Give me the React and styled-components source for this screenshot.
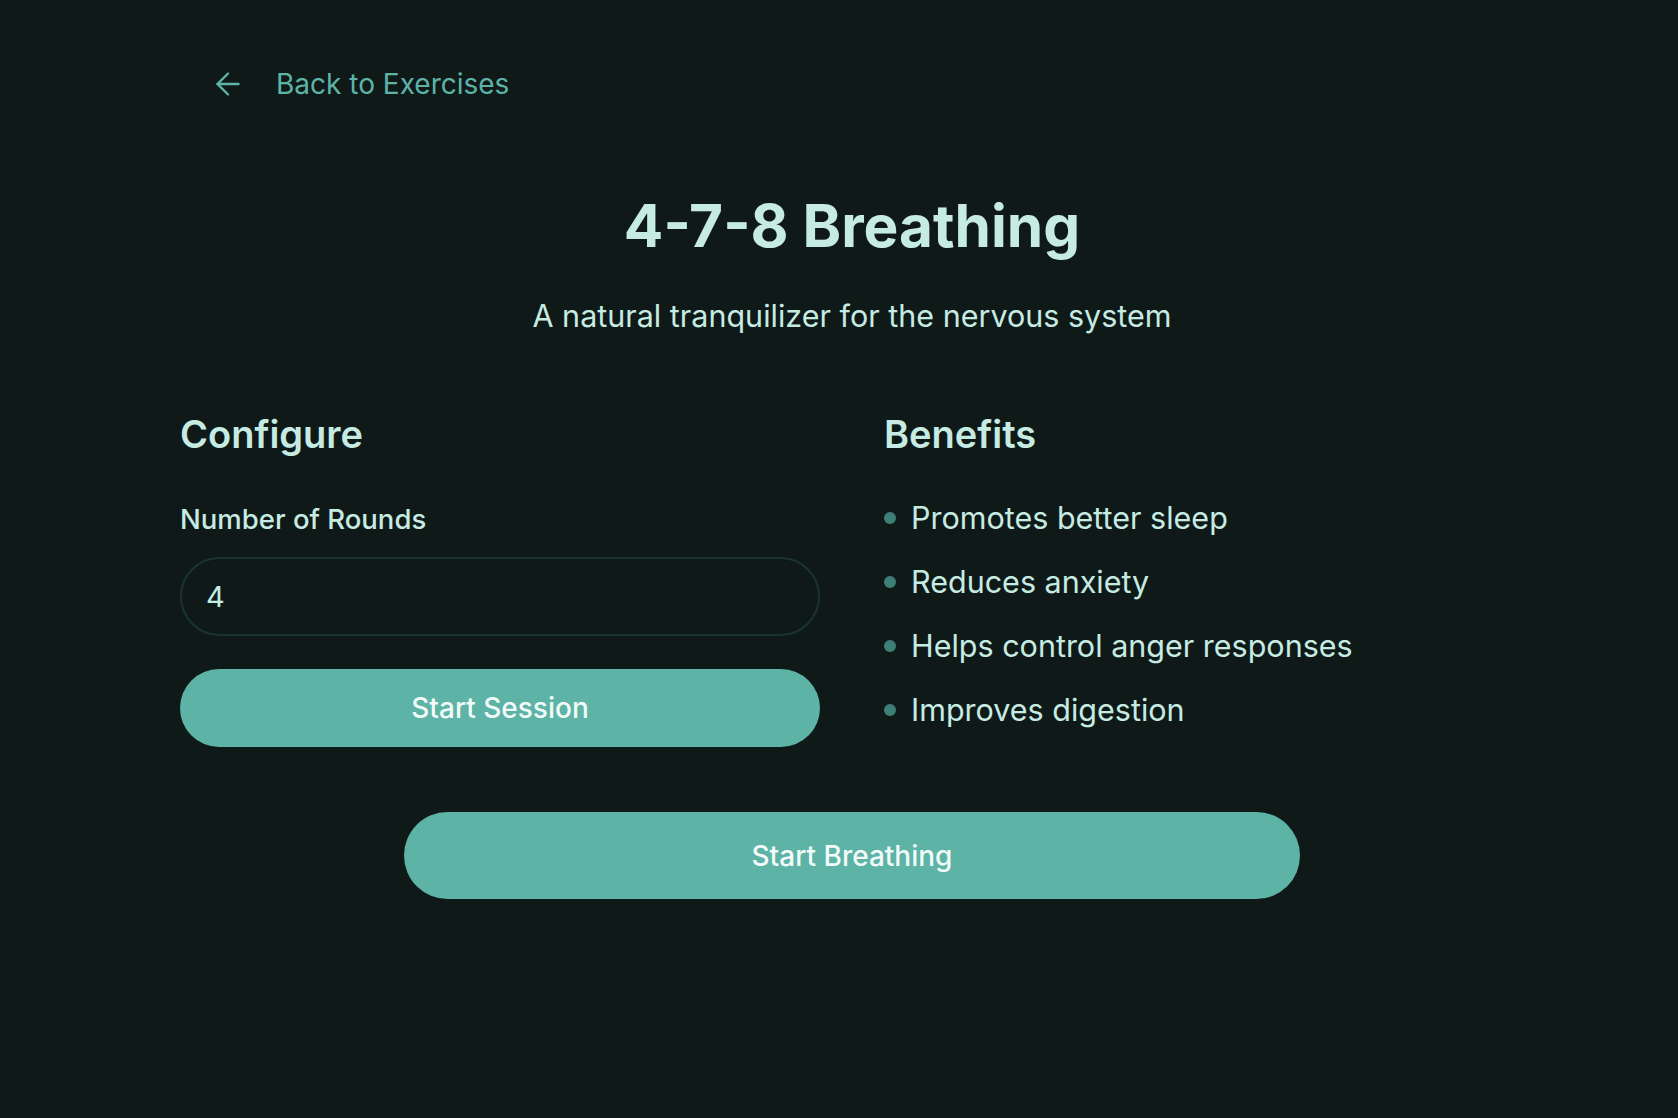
import React, { useState } from "react";
import styled, { createGlobalStyle } from "styled-components";
import { ArrowLeft } from "lucide-react";

const GlobalStyle = createGlobalStyle`
  * {
    box-sizing: border-box;
  }
  body {
    margin: 0;
    background: #0f1918;
    font-family: Inter, "Noto Sans", sans-serif;
  }
`;

const Page = styled.div`
  min-height: 100vh;
  padding: 63px 154px 0 180px;
`;

const BackLink = styled.button`
  display: inline-flex;
  align-items: center;
  gap: 30px;
  height: 42px;
  margin-left: 30px;
  padding: 0;
  background: none;
  border: none;
  color: #5db3a6;
  font-family: inherit;
  font-size: 28px;
  line-height: 42px;
  cursor: pointer;
`;

const Title = styled.h1`
  margin: 84px 0 0;
  text-align: center;
  color: #c6ebe3;
  font-size: 58.5px;
  font-weight: 700;
  line-height: 72px;
`;

const Subtitle = styled.p`
  margin: 30px 0 0;
  text-align: center;
  color: #c6ebe3;
  font-size: 30.5px;
  line-height: 48px;
`;

const Columns = styled.div`
  display: grid;
  grid-template-columns: 640px 640px;
  gap: 64px;
  margin-top: 70px;
`;

const Column = styled.section`
  display: flex;
  flex-direction: column;
`;

const Heading = styled.h2`
  margin: 0;
  color: #c6ebe3;
  font-size: 38px;
  font-weight: 600;
  line-height: 48px;
`;

const Label = styled.label`
  margin-top: 40px;
  color: #c6ebe3;
  font-size: 27.5px;
  font-weight: 500;
  line-height: 42px;
`;

const RoundsInput = styled.input`
  margin-top: 17px;
  height: 79px;
  padding: 0 24px;
  background: transparent;
  border: 2px solid #193431;
  border-radius: 999px;
  color: #c6ebe3;
  font-family: inherit;
  font-size: 29px;
  outline: none;
`;

const PillButton = styled.button`
  height: ${(p) => (p.$big ? "87px" : "78px")};
  width: ${(p) => (p.$big ? "896px" : "100%")};
  margin-top: ${(p) => (p.$big ? "65px" : "33px")};
  align-self: center;
  background: #5cb3a6;
  border: none;
  border-radius: 999px;
  color: #f3fbf9;
  font-family: inherit;
  font-size: 28px;
  font-weight: 500;
  cursor: pointer;
`;

const Centered = styled.div`
  display: flex;
  justify-content: center;
`;

const BenefitList = styled.ul`
  list-style: none;
  margin: 36px 0 0;
  padding: 0;
  display: flex;
  flex-direction: column;
  gap: 16px;
`;

const Benefit = styled.li`
  display: flex;
  align-items: center;
  gap: 15px;
  color: #c6ebe3;
  font-size: 30.5px;
  line-height: 48px;

  &::before {
    content: "";
    width: 12px;
    height: 12px;
    border-radius: 50%;
    background: #3e8077;
    flex-shrink: 0;
  }
`;

const benefits = [
  "Promotes better sleep",
  "Reduces anxiety",
  "Helps control anger responses",
  "Improves digestion",
];

const App = () => {
  const [rounds, setRounds] = useState("4");

  return (
    <>
      <GlobalStyle />
      <Page>
        <BackLink>
          <ArrowLeft size={36} strokeWidth={1.6} />
          Back to Exercises
        </BackLink>
        <Title>4-7-8 Breathing</Title>
        <Subtitle>A natural tranquilizer for the nervous system</Subtitle>
        <Columns>
          <Column>
            <Heading>Configure</Heading>
            <Label htmlFor="rounds">Number of Rounds</Label>
            <RoundsInput
              id="rounds"
              type="text"
              value={rounds}
              onChange={(e) => setRounds(e.target.value)}
            />
            <PillButton>Start Session</PillButton>
          </Column>
          <Column>
            <Heading>Benefits</Heading>
            <BenefitList>
              {benefits.map((b) => (
                <Benefit key={b}>{b}</Benefit>
              ))}
            </BenefitList>
          </Column>
        </Columns>
        <Centered>
          <PillButton $big>Start Breathing</PillButton>
        </Centered>
      </Page>
    </>
  );
};

export default App;
